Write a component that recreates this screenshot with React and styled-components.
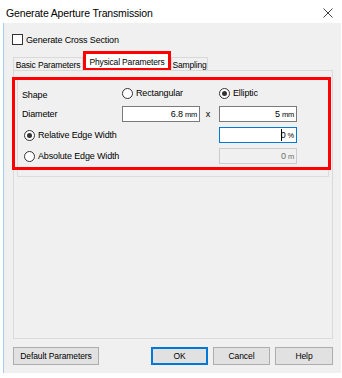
import React from "react";
import styled, { createGlobalStyle, css } from "styled-components";

const GlobalStyle = createGlobalStyle`
  html, body { margin: 0; padding: 0; background: #ffffff; }
  body { font-family: "Liberation Sans", Arial, sans-serif; color: #000; }
  * { box-sizing: border-box; }
`;

const Window = styled.div`
  width: 342px;
  height: 378px;
  background: #ffffff;
  display: flex;
  flex-direction: column;
  overflow: hidden;
`;

const TitleBar = styled.div`
  height: 23px;
  display: flex;
  align-items: center;
  justify-content: space-between;
  padding: 3px 9px 0 6px;
  background: #ffffff;
`;

const Title = styled.span`
  font-size: 10.5px;
  letter-spacing: -0.15px;
  color: #000;
`;

const CloseButton = styled.div`
  width: 10px;
  height: 10px;
  display: flex;
  svg { display: block; }
`;

const Body = styled.div`
  margin-left: 3px;
  width: 338px;
  height: 350px;
  background: #f0f0f0;
  border-left: 1px solid #a6cbef;
  padding-left: 8px;
  display: flex;
  flex-direction: column;
`;

const CheckRow = styled.label`
  margin-top: 11px;
  height: 11px;
  display: flex;
  align-items: center;
  gap: 3px;
  font-size: 9px;
  letter-spacing: -0.15px;
`;

const CheckBox = styled.span`
  width: 11px;
  height: 11px;
  border: 1px solid #333333;
  background: #ffffff;
  flex: none;
`;

const TabStrip = styled.div`
  margin-top: 8px;
  margin-left: 1px;
  height: 17px;
  display: flex;
  align-items: flex-end;
`;

const Tab = styled.div`
  position: relative;
  width: ${(p) => p.$w}px;
  height: ${(p) => (p.$active ? 17 : 13)}px;
  border: 1px solid #d9d9d9;
  border-bottom: none;
  background: ${(p) => (p.$active ? "#ffffff" : "#f0f0f0")};
  font-size: 8.5px;
  letter-spacing: -0.15px;
  display: flex;
  align-items: center;
  justify-content: center;
  padding-top: ${(p) => (p.$active ? 0 : 1)}px;
  white-space: nowrap;
  ${(p) =>
    p.$highlight &&
    css`
      &::after {
        content: "";
        position: absolute;
        left: -1px;
        right: -1px;
        top: -3px;
        bottom: -1px;
        border: 3px solid #ff0000;
      }
    `}
`;

const Panel = styled.div`
  position: relative;
  margin-left: 1px;
  width: 320px;
  height: 269px;
  border: 1px solid #dadada;
  background: #f0f0f0;
  padding: 8px 0 0 3px;
`;

const GroupBox = styled.div`
  width: 312px;
  height: 98px;
  border: 1px solid #dcdcdc;
  padding: 5px 0 0 4px;
  display: grid;
  grid-template-columns: 100px 78px 19px 78px;
  grid-auto-rows: 16px;
  row-gap: 5px;
  align-items: center;
  font-size: 9px;
  letter-spacing: -0.15px;
`;

const FieldLabel = styled.span`
  grid-column: ${(p) => p.$col || "auto"};
  padding-top: ${(p) => p.$drop || 0}px;
  white-space: nowrap;
`;

const Radio = styled.label`
  grid-column: ${(p) => p.$col || "auto"};
  display: flex;
  align-items: center;
  gap: 3px;
  padding-left: ${(p) => p.$indent || 0}px;
  white-space: nowrap;
`;

const RadioDot = styled.span`
  width: 11px;
  height: 11px;
  border-radius: 50%;
  border: 1px solid #333333;
  background: #ffffff;
  flex: none;
  display: flex;
  align-items: center;
  justify-content: center;
  &::after {
    content: "";
    width: 5px;
    height: 5px;
    border-radius: 50%;
    background: ${(p) => (p.$checked ? "#333333" : "transparent")};
  }
`;

const Times = styled.span`
  text-align: center;
  padding-right: 3px;
`;

const Input = styled.div`
  grid-column: ${(p) => p.$col || "auto"};
  height: 16px;
  border: 1px solid
    ${(p) => (p.$focused ? "#0078d7" : p.$disabled ? "#cccccc" : "#7a7a7a")};
  background: ${(p) => (p.$disabled ? "#f0f0f0" : "#ffffff")};
  color: ${(p) => (p.$disabled ? "#6d6d6d" : "#000000")};
  display: flex;
  align-items: center;
  justify-content: flex-end;
  padding-right: 2px;
  font-size: 9px;
`;

const Unit = styled.span`
  font-size: 7.5px;
  margin-left: 2px;
  letter-spacing: -0.2px;
`;

const Caret = styled.span`
  display: inline-flex;
  position: relative;
  &::before {
    content: "";
    position: absolute;
    left: 0;
    top: -1px;
    bottom: -1px;
    border-left: 1px solid #000;
  }
`;

const Highlight = styled.div`
  position: absolute;
  left: -2px;
  top: 6px;
  width: 319px;
  height: 93px;
  border: 3px solid #ff0000;
  pointer-events: none;
`;

const ButtonRow = styled.div`
  margin-top: 8px;
  margin-left: 1px;
  width: 320px;
  display: flex;
  justify-content: space-between;
`;

const ButtonGroup = styled.div`
  display: flex;
  gap: 5px;
`;

const Button = styled.button`
  width: ${(p) => p.$w}px;
  height: 18px;
  padding: 0;
  margin: 0;
  background: #e1e1e1;
  border: 1px solid ${(p) => (p.$default ? "#0078d7" : "#adadad")};
  box-shadow: ${(p) => (p.$default ? "inset 0 0 0 1px #0078d7" : "none")};
  font-family: "Liberation Sans", Arial, sans-serif;
  font-size: 8.5px;
  letter-spacing: -0.1px;
  color: #000;
`;

export default function App() {
  return (
    <>
      <GlobalStyle />
      <Window>
        <TitleBar>
          <Title>Generate Aperture Transmission</Title>
          <CloseButton>
            <svg width="10" height="10" viewBox="0 0 10 10">
              <path d="M0.5 0.5 L9.5 9.5 M9.5 0.5 L0.5 9.5" stroke="#444" strokeWidth="1" fill="none" />
            </svg>
          </CloseButton>
        </TitleBar>
        <Body>
          <CheckRow>
            <CheckBox />
            <span>Generate Cross Section</span>
          </CheckRow>
          <TabStrip>
            <Tab $w={70}>Basic Parameters</Tab>
            <Tab $w={88} $active $highlight>Physical Parameters</Tab>
            <Tab $w={37}>Sampling</Tab>
          </TabStrip>
          <Panel>
            <GroupBox>
              <FieldLabel $drop={3}>Shape</FieldLabel>
              <Radio $col="2 / 4">
                <RadioDot />
                Rectangular
              </Radio>
              <Radio $col="4 / 5">
                <RadioDot $checked />
                Elliptic
              </Radio>

              <FieldLabel>Diameter</FieldLabel>
              <Input>
                6.8<Unit>mm</Unit>
              </Input>
              <Times>x</Times>
              <Input>
                5<Unit>mm</Unit>
              </Input>

              <Radio $col="1 / 4" $indent={2}>
                <RadioDot $checked />
                Relative Edge Width
              </Radio>
              <Input $col="4 / 5" $focused>
                <Caret>0</Caret>
                <Unit>%</Unit>
              </Input>

              <Radio $col="1 / 4" $indent={2}>
                <RadioDot />
                Absolute Edge Width
              </Radio>
              <Input $col="4 / 5" $disabled>
                0<Unit>m</Unit>
              </Input>
            </GroupBox>
            <Highlight />
          </Panel>
          <ButtonRow>
            <Button $w={86}>Default Parameters</Button>
            <ButtonGroup>
              <Button $w={57} $default>OK</Button>
              <Button $w={57}>Cancel</Button>
              <Button $w={58}>Help</Button>
            </ButtonGroup>
          </ButtonRow>
        </Body>
      </Window>
    </>
  );
}
